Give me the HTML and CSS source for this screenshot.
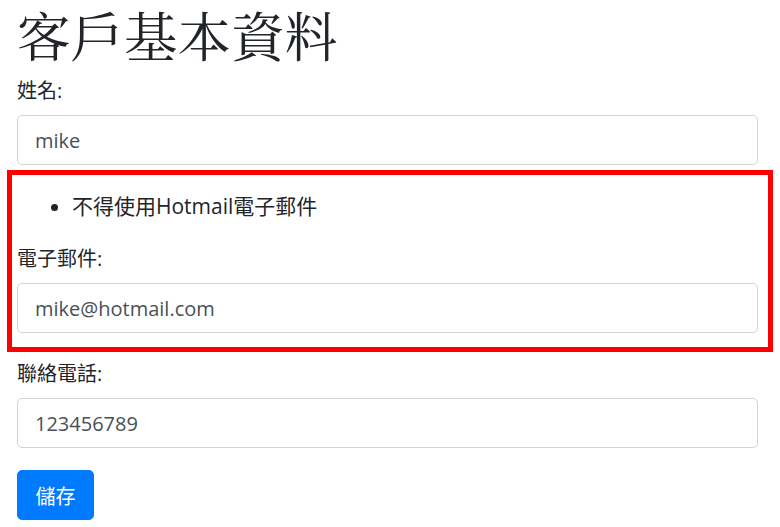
FILE: index.html
```html
<!DOCTYPE html>
<html lang="zh-Hant">
<head>
  <meta charset="UTF-8">
  <meta name="viewport" content="width=device-width, initial-scale=1.0">
  <title>客戶基本資料</title>
  <link rel="stylesheet" href="styles.css">
</head>
<body>
  <div class="container">
    <h1>客戶基本資料</h1>

    <div class="form-group">
      <label for="name">姓名:</label>
      <input type="text" id="name" class="form-control" value="mike">
    </div>

    <!-- highlighted part: validation summary + email -->
    <div class="highlight">
      <ul class="validation-summary">
        <li>不得使用Hotmail電子郵件</li>
      </ul>
      <div class="form-group">
        <label for="email">電子郵件:</label>
        <input type="text" id="email" class="form-control" value="mike@hotmail.com">
      </div>
    </div>

    <div class="form-group">
      <label for="phone">聯絡電話:</label>
      <input type="text" id="phone" class="form-control" value="123456789">
    </div>

    <button class="btn-save">儲存</button>
  </div>
</body>
</html>
```

FILE: styles.css
```css
* {
  margin: 0;
  padding: 0;
  box-sizing: border-box;
}

body {
  font-family: 'Open Sans', 'Noto Sans CJK TC', sans-serif;
  font-size: 20px;
  color: #212529;
  background: #fff;
}

.container {
  padding: 0 22px 0 17px;
}

h1 {
  font-family: 'Noto Serif CJK TC', 'Liberation Serif', 'Noto Sans CJK TC', serif;
  font-size: 53.5px;
  font-weight: 400;
  line-height: 72px;
  margin-top: -2px;
  margin-bottom: 9px;
  color: #212529;
}

.form-group {
  padding-bottom: 5px;
}

label {
  display: block;
  line-height: 24px;
  margin-bottom: 12px;
}

.form-control {
  display: block;
  width: 100%;
  height: 50px;
  padding: 0 17px;
  font-family: 'Open Sans', 'Noto Sans CJK TC', sans-serif;
  font-size: 20px;
  color: #495057;
  background: #fff;
  border: 1px solid #ced4da;
  border-radius: 5px;
}

.highlight {
  margin: 0 -15px 10px -10px;
  padding: 19px 10px 9px 5px;
  border: 5px solid #ff0000;
}

.validation-summary {
  list-style: disc;
  padding-left: 55px;
  font-size: 21px;
  line-height: 24px;
  margin-bottom: 29px;
}

.btn-save {
  margin-top: 17px;
  width: 77px;
  height: 50px;
  font-family: 'Open Sans', 'Noto Sans CJK TC', sans-serif;
  font-size: 20px;
  color: #fff;
  background: #007bff;
  border: 1px solid #007bff;
  border-radius: 5px;
  cursor: pointer;
}
```
